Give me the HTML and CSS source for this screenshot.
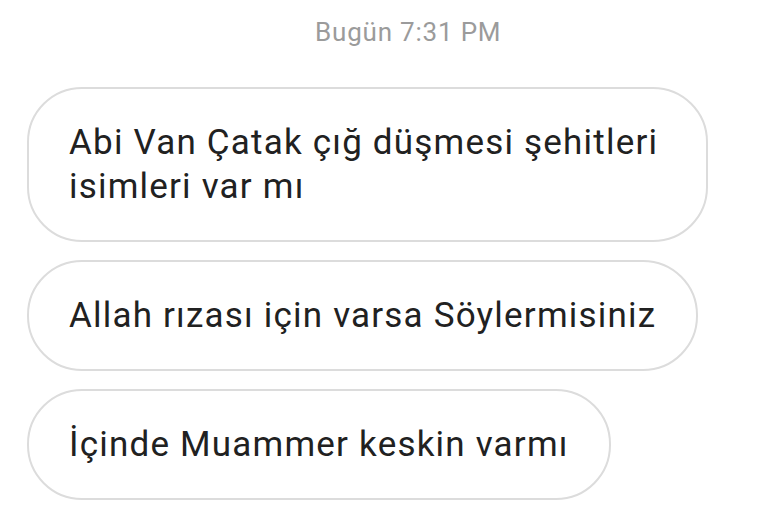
FILE: index.html
```html
<!DOCTYPE html>
<html>
<head>
<meta charset="utf-8">
<link rel="stylesheet" href="styles.css">
</head>
<body>
<div class="chat">
  <div class="stamp">Bugün 7:31 PM</div>
  <div class="list">
    <div class="bubble">Abi Van Çatak çığ düşmesi şehitleri isimleri var mı</div>
    <div class="bubble">Allah rızası için varsa Söylermisiniz</div>
    <div class="bubble">İçinde Muammer keskin varmı</div>
  </div>
</div>
</body>
</html>
```

FILE: styles.css
```css
html, body {
  margin: 0;
  padding: 0;
  background: #ffffff;
}
.chat {
  font-family: Roboto, "Noto Sans", sans-serif;
  padding: 14px 0 0 27px;
  width: 737px;
}
.stamp {
  color: #9b9b9b;
  font-size: 26px;
  letter-spacing: 0.8px;
  line-height: 36px;
  padding-left: 288px;
  margin-bottom: 37px;
}
.list {
  display: flex;
  flex-direction: column;
  align-items: flex-start;
  gap: 18px;
}
.bubble {
  box-sizing: border-box;
  max-width: 681px;
  border: 2px solid #dcdcdc;
  border-radius: 55px;
  padding: 32px 40px 31px 40px;
  font-size: 35px;
  letter-spacing: 1.2px;
  line-height: 44px;
  color: #212121;
}
```
